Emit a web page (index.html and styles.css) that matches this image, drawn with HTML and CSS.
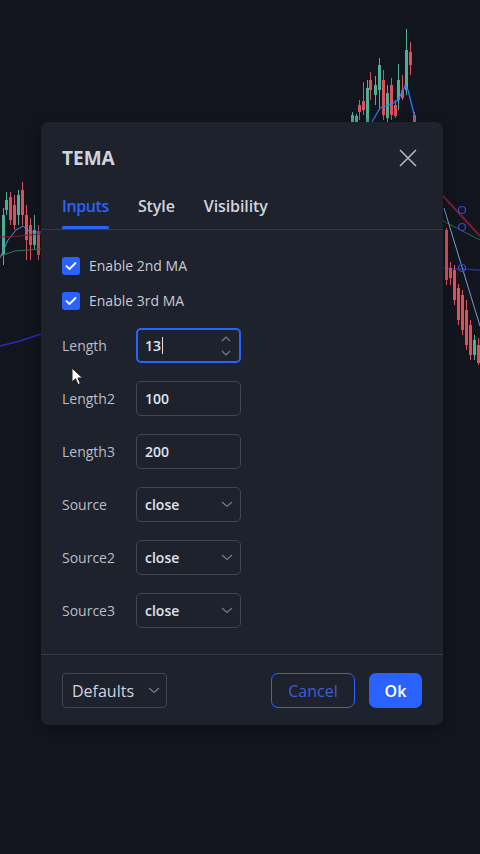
FILE: index.html
```html
<!DOCTYPE html>
<html lang="en">
<head>
<meta charset="utf-8">
<title>TEMA</title>
<link rel="stylesheet" href="styles.css">
</head>
<body>
<svg class="chart" width="480" height="854" viewBox="0 0 480 854">
  <g stroke-width="1">
    <!-- top cluster -->
    <g class="up"><line x1="352.5" y1="112" x2="352.5" y2="122"/><rect x="351" y="115" width="3" height="7"/></g>
    <g class="up"><line x1="356.5" y1="114" x2="356.5" y2="122"/><rect x="355" y="116" width="3" height="6"/></g>
    <g class="dn"><line x1="359.5" y1="100" x2="359.5" y2="120"/><rect x="358" y="105" width="3" height="7"/></g>
    <g class="dn"><line x1="363.5" y1="82" x2="363.5" y2="115"/><rect x="362" y="101" width="3" height="9"/></g>
    <g class="up"><line x1="367.5" y1="80" x2="367.5" y2="122"/><rect x="366" y="88" width="3" height="34"/></g>
    <g class="dn"><line x1="370.5" y1="72" x2="370.5" y2="100"/><rect x="369" y="80" width="3" height="10"/></g>
    <g class="up"><line x1="375.5" y1="76" x2="375.5" y2="105"/><rect x="374" y="85" width="3" height="10"/></g>
    <g class="up"><line x1="379.5" y1="58" x2="379.5" y2="110"/><rect x="378" y="65" width="3" height="25"/></g>
    <g class="dn"><line x1="383.5" y1="70" x2="383.5" y2="120"/><rect x="382" y="80" width="3" height="35"/></g>
    <g class="up"><line x1="387.5" y1="85" x2="387.5" y2="122"/><rect x="386" y="93" width="3" height="25"/></g>
    <g class="dn"><line x1="391.5" y1="78" x2="391.5" y2="120"/><rect x="390" y="85" width="3" height="30"/></g>
    <g class="dn"><line x1="395.5" y1="100" x2="395.5" y2="118"/><rect x="394" y="105" width="3" height="11"/></g>
    <g class="up"><line x1="398.5" y1="64" x2="398.5" y2="110"/><rect x="397" y="80" width="3" height="20"/></g>
    <g class="dn"><line x1="402.5" y1="75" x2="402.5" y2="100"/><rect x="401" y="90" width="3" height="8"/></g>
    <g class="up"><line x1="406.5" y1="29" x2="406.5" y2="95"/><rect x="405" y="50" width="3" height="40"/></g>
    <g class="dn"><line x1="410.5" y1="42" x2="410.5" y2="75"/><rect x="409" y="52" width="3" height="13"/></g>
    <g class="dn"><line x1="414.5" y1="112" x2="414.5" y2="122"/><rect x="413" y="115" width="3" height="7"/></g>
    <polyline points="372,122 380,108 392,104 398,100 405,86 408,90 415,118" fill="none" stroke="#3179f5" stroke-width="1.3"/>

    <!-- left cluster -->
    <g class="up"><line x1="3.5" y1="208" x2="3.5" y2="265"/><rect x="2" y="215" width="3" height="40"/></g>
    <g class="up"><line x1="6.5" y1="192" x2="6.5" y2="215"/><rect x="5" y="200" width="3" height="10"/></g>
    <g class="dn"><line x1="10.5" y1="192" x2="10.5" y2="225"/><rect x="9" y="197" width="3" height="23"/></g>
    <g class="dn"><line x1="14.5" y1="195" x2="14.5" y2="230"/><rect x="13" y="205" width="3" height="20"/></g>
    <g class="up"><line x1="18.5" y1="190" x2="18.5" y2="225"/><rect x="17" y="195" width="3" height="20"/></g>
    <g class="dn"><line x1="22.5" y1="182" x2="22.5" y2="225"/><rect x="21" y="190" width="3" height="25"/></g>
    <g class="dn"><line x1="26.5" y1="205" x2="26.5" y2="260"/><rect x="25" y="215" width="3" height="25"/></g>
    <g class="dn"><line x1="30.5" y1="218" x2="30.5" y2="260"/><rect x="29" y="225" width="3" height="20"/></g>
    <g class="up"><line x1="34.5" y1="215" x2="34.5" y2="250"/><rect x="33" y="230" width="3" height="15"/></g>
    <g class="dn"><line x1="38.5" y1="225" x2="38.5" y2="260"/><rect x="37" y="233" width="3" height="22"/></g>
    <polyline points="0,258 8,240 16,230 23,226 30,232 41,232" fill="none" stroke="#5b8ad6" stroke-width="1"/>
    <polyline points="0,256 15,251 41,249" fill="none" stroke="#2e7d4f" stroke-width="1"/>
    <polyline points="0,237 20,236 41,234" fill="none" stroke="#7a2233" stroke-width="1"/>
    <polyline points="0,346 20,341 41,334" fill="none" stroke="#2b2bb5" stroke-width="1.5"/>

    <!-- right cluster -->
    <polyline points="443,196 480,236" fill="none" stroke="#7a1d33" stroke-width="2"/>
    <polyline points="443,221 480,240" fill="none" stroke="#2e6b46" stroke-width="1"/>
    <polyline points="443,268 480,270" fill="none" stroke="#2a2a9a" stroke-width="1.5"/>
    <polyline points="444,208 480,326" fill="none" stroke="#6ea1d8" stroke-width="1"/>
    <circle cx="462" cy="210" r="3.5" fill="none" stroke="#3748c8" stroke-width="1.2"/>
    <circle cx="462" cy="227" r="3.5" fill="none" stroke="#3748c8" stroke-width="1.2"/>
    <circle cx="462" cy="268" r="3.5" fill="none" stroke="#3748c8" stroke-width="1.2"/>
    <g class="dn"><line x1="446.5" y1="228" x2="446.5" y2="285"/><rect x="445" y="230" width="3" height="50"/></g>
    <g class="dn"><line x1="450.5" y1="262" x2="450.5" y2="285"/><rect x="449" y="268" width="3" height="10"/></g>
    <g class="dn"><line x1="454.5" y1="265" x2="454.5" y2="305"/><rect x="453" y="270" width="3" height="30"/></g>
    <g class="dn"><line x1="458.5" y1="284" x2="458.5" y2="325"/><rect x="457" y="288" width="3" height="32"/></g>
    <g class="dn"><line x1="462.5" y1="290" x2="462.5" y2="335"/><rect x="461" y="295" width="3" height="35"/></g>
    <g class="dn"><line x1="466.5" y1="300" x2="466.5" y2="350"/><rect x="465" y="310" width="3" height="35"/></g>
    <g class="dn"><line x1="470.5" y1="320" x2="470.5" y2="360"/><rect x="469" y="325" width="3" height="30"/></g>
    <g class="up"><line x1="474.5" y1="335" x2="474.5" y2="360"/><rect x="473" y="340" width="3" height="15"/></g>
    <g class="dn"><line x1="478.5" y1="338" x2="478.5" y2="365"/><rect x="477" y="345" width="3" height="18"/></g>
  </g>
</svg>

<div class="dialog">
  <div class="header">
    <div class="title">TEMA</div>
    <svg class="close" width="18" height="18" viewBox="0 0 18 18"><path d="M1 1L17 17M17 1L1 17" stroke="#b2b5be" stroke-width="1.6" fill="none"/></svg>
  </div>
  <div class="tabs">
    <div class="tab active">Inputs</div>
    <div class="tab">Style</div>
    <div class="tab">Visibility</div>
  </div>
  <div class="content">
    <div class="check-row">
      <span class="checkbox"><svg width="12" height="10" viewBox="0 0 12 10"><path d="M1.5 5.2L4.5 8L10.5 2" stroke="#fff" stroke-width="1.8" fill="none" stroke-linecap="round" stroke-linejoin="round"/></svg></span>
      <span class="check-label">Enable 2nd MA</span>
    </div>
    <div class="check-row">
      <span class="checkbox"><svg width="12" height="10" viewBox="0 0 12 10"><path d="M1.5 5.2L4.5 8L10.5 2" stroke="#fff" stroke-width="1.8" fill="none" stroke-linecap="round" stroke-linejoin="round"/></svg></span>
      <span class="check-label">Enable 3rd MA</span>
    </div>
    <div class="fields">
      <div class="field">
        <span class="label">Length</span>
        <div class="input focused"><span class="value">13<span class="caret"></span></span>
          <svg class="spin" width="12" height="22" viewBox="0 0 12 22"><path d="M2 6L6 2L10 6M2 16L6 20L10 16" stroke="#787b86" stroke-width="1.2" fill="none"/></svg>
        </div>
      </div>
      <div class="field">
        <span class="label">Length2</span>
        <div class="input"><span class="value">100</span></div>
      </div>
      <div class="field">
        <span class="label">Length3</span>
        <div class="input"><span class="value">200</span></div>
      </div>
      <div class="field">
        <span class="label">Source</span>
        <div class="input"><span class="value">close</span>
          <svg class="chev" width="12" height="7" viewBox="0 0 12 7"><path d="M1 1L6 5.5L11 1" stroke="#787b86" stroke-width="1.2" fill="none"/></svg>
        </div>
      </div>
      <div class="field">
        <span class="label">Source2</span>
        <div class="input"><span class="value">close</span>
          <svg class="chev" width="12" height="7" viewBox="0 0 12 7"><path d="M1 1L6 5.5L11 1" stroke="#787b86" stroke-width="1.2" fill="none"/></svg>
        </div>
      </div>
      <div class="field">
        <span class="label">Source3</span>
        <div class="input"><span class="value">close</span>
          <svg class="chev" width="12" height="7" viewBox="0 0 12 7"><path d="M1 1L6 5.5L11 1" stroke="#787b86" stroke-width="1.2" fill="none"/></svg>
        </div>
      </div>
    </div>
  </div>
  <div class="footer">
    <div class="btn defaults">Defaults
      <svg width="12" height="7" viewBox="0 0 12 7"><path d="M1 1L6 5.5L11 1" stroke="#787b86" stroke-width="1.2" fill="none"/></svg>
    </div>
    <div class="actions">
      <div class="btn cancel">Cancel</div>
      <div class="btn ok">Ok</div>
    </div>
  </div>
</div>

<svg class="cursor" width="14" height="20" viewBox="0 0 14 20"><path d="M1 1L1 15L4.5 11.8L7 17.5L9.3 16.5L6.9 11L11.5 11Z" fill="#fff" stroke="#222" stroke-width="1"/></svg>
</body>
</html>
```

FILE: styles.css
```css
* { box-sizing: border-box; }
html, body { margin: 0; padding: 0; }
body {
  width: 480px;
  height: 854px;
  overflow: hidden;
  position: relative;
  background: #12151d;
  font-family: "Open Sans", "Liberation Sans", sans-serif;
  color: #d1d4dc;
}
.chart { position: absolute; left: 0; top: 0; }
.chart .up line { stroke: #4fae96; }
.chart .up rect { fill: #4fae96; }
.chart .dn line { stroke: #d9515c; }
.chart .dn rect { fill: #d9515c; }

.dialog {
  position: absolute;
  left: 41px;
  top: 122px;
  width: 402px;
  height: 603px;
  background: #1e222d;
  border-radius: 7px;
  box-shadow: 0 2px 12px rgba(0,0,0,0.35);
  display: flex;
  flex-direction: column;
}
.header {
  display: flex;
  align-items: center;
  justify-content: space-between;
  padding: 24px 26px 0 21px;
  height: 48px;
}
.title {
  font-size: 19px;
  font-weight: 700;
  line-height: 24px;
  color: #d1d4dc;
}
.tabs {
  display: flex;
  gap: 29px;
  margin-top: 12px;
  padding: 0 21px;
  border-bottom: 1px solid #363a45;
  height: 48px;
}
.tab {
  font-size: 16px;
  font-weight: 600;
  color: #d1d4dc;
  height: 47px;
  display: flex;
  align-items: center;
  letter-spacing: -0.1px;
  position: relative;
}
.tab.active { color: #2962ff; letter-spacing: -0.4px; }
.tab.active::after {
  content: "";
  position: absolute;
  left: 0; right: 0; bottom: 0;
  height: 3px;
  border-radius: 2px;
  background: #2962ff;
}
.content {
  padding: 18px 21px 0 21px;
  flex: 1;
  border-bottom: 1px solid #363a45;
}
.check-row {
  display: flex;
  align-items: center;
  height: 35px;
  gap: 9px;
}
.checkbox {
  width: 18px; height: 18px;
  border-radius: 3px;
  background: #2962ff;
  display: flex;
  align-items: center;
  justify-content: center;
}
.check-label { font-size: 14px; color: #c8cbd3; }
.fields {
  margin-top: 10px;
  display: flex;
  flex-direction: column;
  gap: 18px;
}
.field { display: flex; align-items: center; height: 35px; }
.label { width: 74px; font-size: 14px; color: #babdc5; }
.input {
  width: 105px;
  height: 35px;
  border: 1px solid #434651;
  border-radius: 5px;
  display: flex;
  align-items: center;
  justify-content: space-between;
  padding: 0 7px 0 8px;
}
.input.focused { border: 2px solid #2962ff; padding: 0 7px 0 7px; }
.value { font-size: 14px; font-weight: 600; color: #e0e3eb; display: flex; align-items: center; }
.caret { display: inline-block; width: 1px; height: 17px; background: #e0e3eb; margin-left: 1px; }
.footer {
  display: flex;
  justify-content: space-between;
  align-items: center;
  padding: 18px 21px 17px 21px;
}
.btn {
  height: 35px;
  border-radius: 6px;
  display: flex;
  align-items: center;
  justify-content: center;
  font-size: 16px;
}
.defaults {
  width: 105px;
  border: 1px solid #434651;
  border-radius: 4px;
  justify-content: space-between;
  padding: 0 6px 0 9px;
  color: #d1d4dc;
}
.actions { display: flex; gap: 14px; }
.cancel { width: 84px; border: 1px solid #2962ff; color: #3d5fd6; border-radius: 7px; }
.ok { width: 53px; background: #2962ff; color: #fff; font-weight: 600; border-radius: 7px; }
.cursor { position: absolute; left: 71px; top: 367px; }
```
